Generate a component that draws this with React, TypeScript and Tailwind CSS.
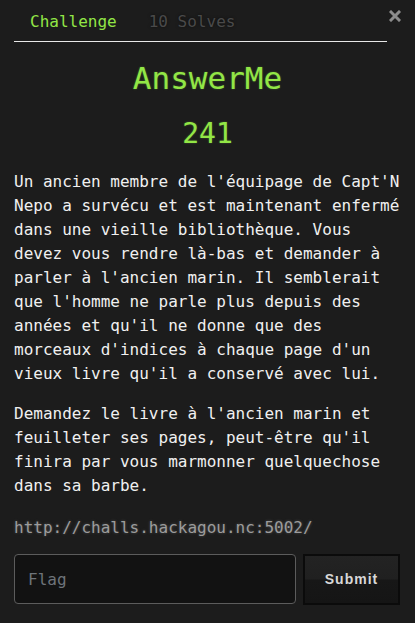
import { useState } from 'react';

const mono = 'font-["DejaVu_Sans_Mono",monospace]';

export default function App() {
    const [flag, setFlag] = useState('');

    return (
        <div className={`min-h-[623px] bg-[#1c1c1c] px-[14px] pb-4 ${mono}`}>
            {/* header: tabs + close */}
            <div className="flex items-start">
                <nav className="flex flex-1 border-b border-[#e8e8e8]">
                    <span className="px-4 pt-[10px] pb-[7px] text-[16px] leading-6 text-[#92e646]">Challenge</span>
                    <span className="px-4 pt-[10px] pb-[7px] text-[16px] leading-6 text-[#4a4a4a] [text-shadow:0_0_3px_rgba(0,0,0,0.6)]">
                        10 Solves
                    </span>
                </nav>
                <button className="ml-[2px] mt-[10px] flex h-3 w-3 items-center justify-center">
                    <svg viewBox="0 0 12 12" width="12" height="12">
                        <path d="M2 2 L10 10 M10 2 L2 10" stroke="#8c8c8c" strokeWidth="3" strokeLinecap="square" />
                    </svg>
                </button>
            </div>

            <h2 className="mt-[17px] text-center text-[31px] leading-[38px] text-[#92e646] [text-shadow:0_0_2px_rgba(146,230,70,0.35)]">
                AnswerMe
            </h2>
            <h3 className="mt-[20px] text-center text-[28px] leading-[34px] text-[#92e646] [text-shadow:0_0_2px_rgba(146,230,70,0.35)]">
                241
            </h3>

            <div className="mt-[19px] text-[16px] leading-6 text-[#f0f0f0]">
                <p className="mb-4">
                    Un ancien membre de l'équipage de Capt'N Nepo a survécu et est maintenant enfermé dans une vieille
                    bibliothèque. Vous devez vous rendre là-bas et demander à parler à l'ancien marin. Il semblerait que
                    l'homme ne parle plus depuis des années et qu'il ne donne que des morceaux d'indices à chaque page
                    d'un vieux livre qu'il a conservé avec lui.
                </p>
                <p className="mb-[18px]">
                    Demandez le livre à l'ancien marin et feuilleter ses pages, peut-être qu'il finira par vous
                    marmonner quelquechose dans sa barbe.
                </p>
                <p className="text-[#9c9c9c] [text-shadow:0_0_3px_rgba(160,160,160,0.4)]">http://challs.hackagou.nc:5002/</p>
            </div>

            <div className="mt-[14px] flex gap-[7px]">
                <input
                    value={flag}
                    onChange={(e) => setFlag(e.target.value)}
                    placeholder="Flag"
                    className={`h-[50px] w-[282px] rounded-[4px] border border-[#5c5c5c] bg-[#121212] px-[13px] text-[16px] text-[#ddd] outline-none placeholder:text-[#6e747a] ${mono}`}
                />
                <button className='h-[51px] w-[97px] border-2 border-[#0b0b0b] bg-[linear-gradient(#232323_0%,#202020_48%,#171717_52%,#151515_100%)] font-["Liberation_Sans",Arial,sans-serif] text-[14px] font-bold tracking-[1px] text-[#d8d8d8]'>
                    Submit
                </button>
            </div>
        </div>
    );
}
